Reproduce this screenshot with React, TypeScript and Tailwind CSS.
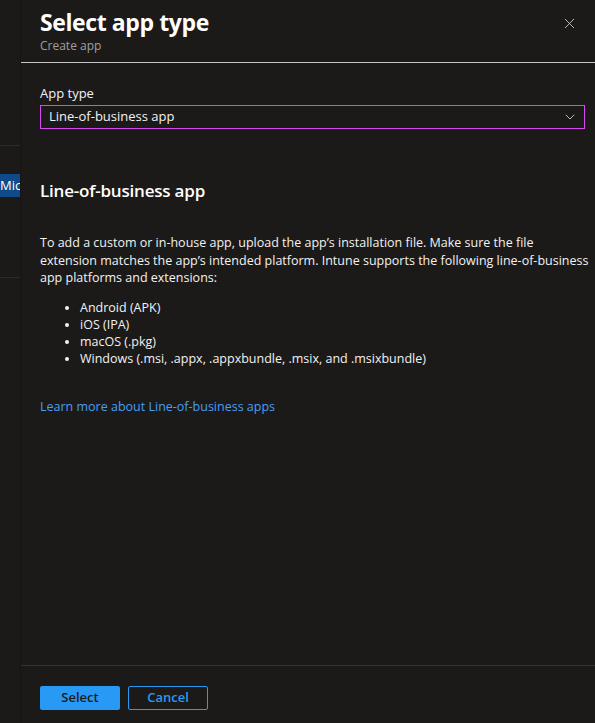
import { X, ChevronDown } from "lucide-react";

const platforms = [
  "Android (APK)",
  "iOS (IPA)",
  "macOS (.pkg)",
  "Windows (.msi, .appx, .appxbundle, .msix, and .msixbundle)",
];

export default function App() {
  return (
    <div
      className="flex h-[723px] w-[595px] overflow-hidden bg-[#1b1a19] text-[#f3f2f1]"
      style={{ fontFamily: '"Open Sans", "Noto Sans", sans-serif' }}
    >
      {/* Background page strip */}
      <div className="flex w-[20px] shrink-0 flex-col bg-[#1b1a19]">
        <div className="h-[145px]" />
        <div className="h-px bg-[#2c2b2a]" />
        <div className="h-[28px]" />
        <div className="flex h-[23px] items-center overflow-hidden bg-[#0f4a8a] text-[13px] leading-none text-white">
          <span className="whitespace-nowrap">Mic</span>
        </div>
        <div className="h-[80px]" />
        <div className="h-px bg-[#2c2b2a]" />
      </div>

      {/* Panel */}
      <div className="flex flex-1 flex-col border-l border-[#161514] bg-[#1b1a19]">
        {/* Header */}
        <div className="flex items-start justify-between pl-[19px] pr-[17px] pt-[6px]">
          <div>
            <h1 className="text-[23px] font-bold leading-[32px] tracking-[-0.4px] text-white">
              Select app type
            </h1>
            <p className="text-[12px] leading-[16px] text-[#a19f9d]">Create app</p>
          </div>
          <button className="mt-[9px] text-[#d2d0ce]">
            <X className="h-[17px] w-[17px]" strokeWidth={1.2} />
          </button>
        </div>
        <div className="mt-[8px] h-px bg-[#c8c6c4]" />

        {/* Body */}
        <div className="flex-1 pl-[19px] pr-[4px] pt-[21px]">
          <label className="block text-[13px] leading-[18px] text-[#f3f2f1]">App type</label>
          <div className="mr-[6px] mt-[3px] flex h-[24px] items-center justify-between border border-[#d847f0] pl-[8px] pr-[6px]">
            <span className="text-[13px] text-[#f3f2f1]">Line-of-business app</span>
            <ChevronDown className="h-[16px] w-[16px] text-[#d2d0ce]" strokeWidth={1.3} />
          </div>

          <h2 className="mt-[50px] text-[17px] font-semibold leading-[24px] tracking-[-0.2px] text-white">
            Line-of-business app
          </h2>

          <p className="mt-[31px] whitespace-nowrap text-[12.5px] leading-[17.5px] text-[#f3f2f1]">
            To add a custom or in-house app, upload the app’s installation file. Make sure the file
            <br />
            extension matches the app’s intended platform. Intune supports the following line-of-business
            <br />
            app platforms and extensions:
          </p>

          <ul className="mt-[12px] pl-[40px] text-[12.5px] leading-[17px]">
            {platforms.map((p) => (
              <li key={p} className="list-disc marker:text-[#f3f2f1]">
                {p}
              </li>
            ))}
          </ul>

          <a className="mt-[31px] block text-[12.5px] leading-[18px] text-[#479ef5]" href="#">
            Learn more about Line-of-business apps
          </a>
        </div>

        {/* Footer */}
        <div className="h-px bg-[#323130]" />
        <div className="flex gap-[8px] pb-[13px] pl-[19px] pt-[20px]">
          <button className="h-[24px] w-[80px] rounded-[2px] bg-[#2899f5] text-[13px] font-semibold text-[#1b1a19]">
            Select
          </button>
          <button className="h-[24px] w-[80px] rounded-[2px] border border-[#2899f5] text-[13px] font-semibold text-[#2899f5]">
            Cancel
          </button>
        </div>
      </div>
    </div>
  );
}
